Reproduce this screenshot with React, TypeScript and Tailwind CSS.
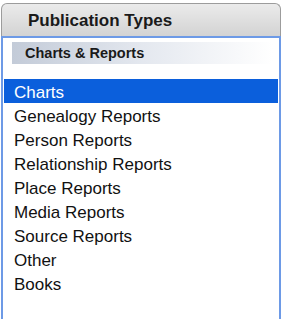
import React from "react";

const items = [
  "Charts",
  "Genealogy Reports",
  "Person Reports",
  "Relationship Reports",
  "Place Reports",
  "Media Reports",
  "Source Reports",
  "Other",
  "Books",
];

export default function App() {
  return (
    <div
      className="w-[282px] h-[319px] bg-white overflow-hidden pt-[3px]"
      style={{ fontFamily: '"Liberation Sans", Arial, Helvetica, sans-serif' }}
    >
      <div className="ml-[1px] w-[280px] h-[316px] flex flex-col">
        <div className="h-[33px] rounded-t-[6px] border-t border-l border-r border-[#9c9c9c] bg-gradient-to-b from-[#ebebeb] to-[#d3d3d3] flex items-center pl-[26px]">
          <span className="text-[17px] font-bold text-[#1a1a1a] leading-none">
            Publication Types
          </span>
        </div>
        <div className="flex-1 border-2 border-b-0 border-[#6d9ae6] bg-white flex flex-col">
          <div className="mt-[4px] ml-[9px] mr-[6px] h-[22px] bg-gradient-to-r from-[#c3cbd8] via-[#e4e8ef] to-white flex items-center pl-[13px]">
            <span className="text-[14.5px] font-bold text-[#1a1a1a] leading-none">
              Charts &amp; Reports
            </span>
          </div>
          <div className="mt-[15px] mx-[1px] flex flex-col">
            {items.map((it, i) => (
              <div
                key={it}
                className={
                  i === 0
                    ? "h-[24px] flex items-center pl-[10px] pt-[3px] bg-[#0b5fdc] text-white text-[17px] leading-none"
                    : "h-[24px] flex items-center pl-[10px] pt-[3px] text-[#111111] text-[17px] leading-none"
                }
              >
                {it}
              </div>
            ))}
          </div>
        </div>
      </div>
    </div>
  );
}
